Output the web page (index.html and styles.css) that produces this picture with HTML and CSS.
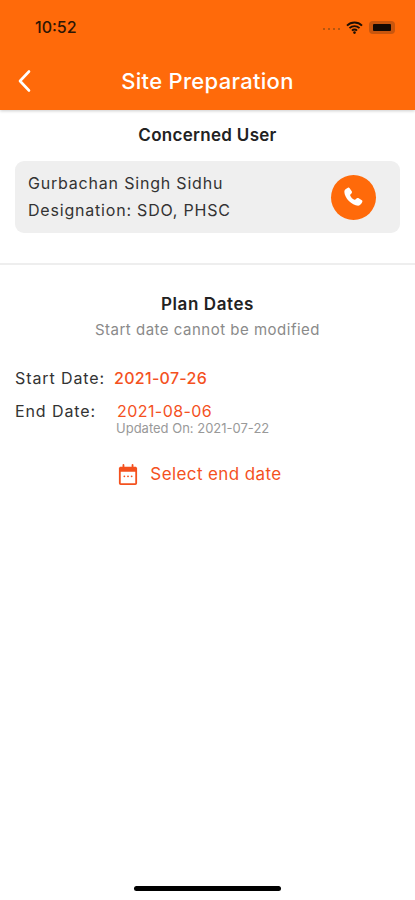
FILE: index.html
```html
<!DOCTYPE html>
<html lang="en">
<head>
    <meta charset="UTF-8">
    <meta name="viewport" content="width=device-width, initial-scale=1.0">
    <title>Site Preparation</title>
    <link rel="stylesheet" href="styles.css">
</head>
<body>
    <div class="screen">
        <header class="app-header">
            <div class="status-bar">
                <span class="status-time">10:52</span>
                <div class="status-icons">
                    <span class="signal-dots"><i></i><i></i><i></i><i></i></span>
                    <svg class="wifi-icon" width="17" height="13" viewBox="0 0 17 13">
                        <path d="M1 4.6a10.6 10.6 0 0 1 15 0M3.5 7.2a7 7 0 0 1 10 0M6 9.6a3.4 3.4 0 0 1 5 0" fill="none" stroke="#1c0f05" stroke-width="1.9"/>
                        <circle cx="8.5" cy="11.6" r="1.3" fill="#1c0f05"/>
                    </svg>
                    <span class="battery"><span class="battery-fill"></span></span>
                </div>
            </div>
            <div class="title-bar">
                <svg class="back-icon" width="14" height="24" viewBox="0 0 14 24">
                    <path d="M12 2.5 3 12l9 9.5" fill="none" stroke="#fff" stroke-width="2.6" stroke-linecap="round" stroke-linejoin="round"/>
                </svg>
                <h1>Site Preparation</h1>
            </div>
        </header>

        <section class="user-section">
            <h2>Concerned User</h2>
            <div class="user-card">
                <div class="user-info">
                    <p>Gurbachan Singh Sidhu</p>
                    <p>Designation: SDO, PHSC</p>
                </div>
                <div class="call-button">
                    <svg width="25" height="25" viewBox="0 0 24 24">
                        <path d="M6.6 2.6c.6-.3 1.300-.2 1.700.4l2 3c.4.600.3 1.300-.1 1.800L9 9.200c-.2.300-.3.600-.1 1 .9 1.800 2.100 3 3.900 3.900.4.200.7.100 1-.1l1.400-1.200c.5-.4 1.200-.5 1.800-.1l3 2c.6.400.7 1.100.4 1.700-.7 1.500-1.800 3.400-3.900 3.400C10.300 19.600 3.400 12.700 3.200 6.500c0-2.100 1.900-3.200 3.400-3.900z" fill="#fff"/>
                    </svg>
                </div>
            </div>
        </section>

        <section class="dates-section">
            <h2>Plan Dates</h2>
            <p class="dates-note">Start date cannot be modified</p>

            <div class="date-row start-row">
                <span class="date-label">Start Date:</span>
                <span class="date-value strong">2021-07-26</span>
            </div>
            <div class="date-row end-row">
                <span class="date-label">End Date:</span>
                <div class="date-stack">
                    <span class="date-value">2021-08-06</span>
                    <span class="date-updated">Updated On: 2021-07-22</span>
                </div>
            </div>

            <div class="select-date">
                <svg width="20" height="23" viewBox="0 0 22 24">
                    <path d="M2 5.500h18v16a1 1 0 0 1-1 1H3a1 1 0 0 1-1-1z" fill="none" stroke="#f4511e" stroke-width="2"/>
                    <path d="M1.500 4.500a1 1 0 0 1 1-1h17a1 1 0 0 1 1 1v4.500h-19z" fill="#f4511e"/>
                    <path d="M6 1.500v3M16 1.500v3" stroke="#f4511e" stroke-width="2" stroke-linecap="round"/>
                    <circle cx="7" cy="14" r="1" fill="#f4511e"/>
                    <circle cx="11" cy="14" r="1" fill="#f4511e"/>
                    <circle cx="15" cy="14" r="1" fill="#f4511e"/>
                </svg>
                <span>Select end date</span>
            </div>
        </section>

        <div class="home-indicator"></div>
    </div>
</body>
</html>
```

FILE: styles.css
```css
* {
    box-sizing: border-box;
}
html, body {
    margin: 0;
    padding: 0;
    background-color: white;
}
body {
    font-family: Inter, "Open Sans", sans-serif;
    color: #222;
}
.screen {
    width: 415px;
    height: 900px;
    display: flex;
    flex-direction: column;
    overflow: hidden;
}
.app-header {
    height: 110px;
    background-color: #ff6a0a;
    box-shadow: 0 1px 3px rgba(0,0,0,0.2);
}
.status-bar {
    height: 54px;
    padding: 17px 20px 0 35px;
    display: flex;
    justify-content: space-between;
    align-items: flex-start;
}
.status-time {
    font-size: 16px;
    line-height: 20px;
    font-weight: 500;
    color: #2e1605;
}
.status-icons {
    display: flex;
    align-items: center;
    gap: 6px;
    height: 20px;
}
.signal-dots {
    display: flex;
    gap: 3px;
    margin-top: 4px;
}
.signal-dots i {
    width: 2px;
    height: 2px;
    background-color: #b5560f;
}
.battery {
    width: 26px;
    height: 13px;
    padding: 3px 4px;
    border-radius: 4px;
    background-color: #c9560e;
}
.battery-fill {
    display: block;
    height: 100%;
    border-radius: 1px;
    background-color: #150a03;
}
.title-bar {
    height: 54px;
    position: relative;
    display: flex;
    align-items: center;
    justify-content: center;
}
.back-icon {
    position: absolute;
    left: 17px;
    top: 15px;
}
.title-bar h1 {
    margin: 0;
    font-size: 22px;
    font-weight: 500;
    letter-spacing: 0.3px;
    color: white;
}
h2 {
    margin: 0;
    font-size: 17px;
    line-height: 20px;
    font-weight: 600;
    letter-spacing: 0.3px;
    color: #222;
    text-align: center;
}
.user-section {
    padding: 15px 15px 30px;
    border-bottom: 2px solid #eeeeee;
}
.user-card {
    margin-top: 16px;
    height: 72px;
    padding: 0 24px 0 13px;
    display: flex;
    align-items: center;
    justify-content: space-between;
    background-color: #efefef;
    border-radius: 9px;
}
.user-info p {
    margin: 0;
    font-size: 16px;
    line-height: 27px;
    letter-spacing: 0.8px;
    color: #333;
}
.call-button {
    width: 45px;
    height: 45px;
    border-radius: 50%;
    background-color: #ff6a0a;
    display: flex;
    align-items: center;
    justify-content: center;
}
.dates-section {
    padding: 29px 15px 0;
}
.dates-section h2 {
    letter-spacing: 0.6px;
}
.dates-note {
    margin: 6px 0 0;
    font-size: 15px;
    line-height: 20px;
    letter-spacing: 0.5px;
    color: #8a8a8a;
    text-align: center;
}
.date-row {
    display: flex;
    font-size: 16px;
    line-height: 20px;
    letter-spacing: 0.9px;
}
.start-row {
    margin-top: 28px;
}
.end-row {
    margin-top: 13px;
}
.date-label {
    color: #333;
}
.start-row .date-label {
    width: 99px;
}
.end-row .date-label {
    width: 102px;
}
.date-value {
    letter-spacing: 0.43px;
    color: #f4511e;
}
.date-value.strong {
    font-weight: 500;
    letter-spacing: 0.3px;
}
.date-stack {
    display: flex;
    flex-direction: column;
}
.date-updated {
    margin-left: -1px;
    font-size: 13px;
    line-height: 14px;
    letter-spacing: 0;
    color: #999;
}
.select-date {
    margin-top: 27px;
    padding-right: 15px;
    display: flex;
    align-items: center;
    justify-content: center;
    gap: 12px;
    font-size: 17px;
    line-height: 24px;
    letter-spacing: 0.4px;
    color: #f4511e;
}
.home-indicator {
    width: 147px;
    height: 5px;
    margin: auto auto 9px;
    border-radius: 3px;
    background-color: #000;
}
```
